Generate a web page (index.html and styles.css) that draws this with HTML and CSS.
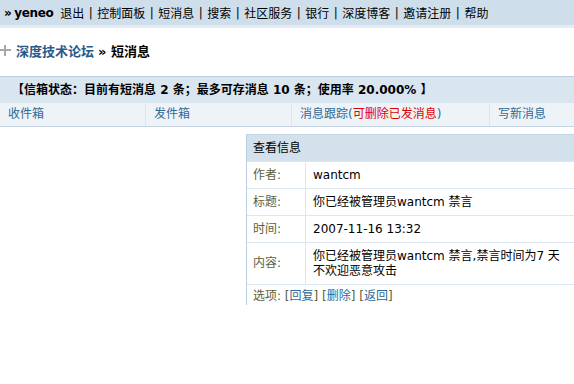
FILE: index.html
```html
<!DOCTYPE html>
<html lang="zh-CN">
<head>
  <meta charset="UTF-8">
  <title>短消息 - 深度技术论坛</title>
  <link rel="stylesheet" href="styles.css">
</head>
<body>

  <div class="topbar">
    <span class="me"><span class="raquo">&raquo;</span>yeneo</span>
    <a href="#">退出</a><span class="sep">|</span>
    <a href="#">控制面板</a><span class="sep">|</span>
    <a href="#">短消息</a><span class="sep">|</span>
    <a href="#">搜索</a><span class="sep">|</span>
    <a href="#">社区服务</a><span class="sep">|</span>
    <a href="#">银行</a><span class="sep">|</span>
    <a href="#">深度博客</a><span class="sep">|</span>
    <a href="#">邀请注册</a><span class="sep">|</span>
    <a href="#">帮助</a>
  </div>

  <div class="nav">
    <svg class="plus" width="11" height="11" viewBox="0 0 11 11">
      <path d="M5 0v11M0 5h11" stroke="#a8a8a8" stroke-width="2"/>
    </svg>
    <a href="#" class="forum">深度技术论坛</a>
    <span class="here">&raquo; 短消息</span>
  </div>

  <div class="pmbox">
    <div class="status">【信箱状态：目前有短消息 <b>2</b> 条；最多可存消息 <b>10</b> 条；使用率 <b>20.000%</b> 】</div>
    <div class="tabs">
      <a href="#" class="tab t1">收件箱</a>
      <a href="#" class="tab t2">发件箱</a>
      <a href="#" class="tab t3">消息跟踪(<span class="red">可删除已发消息</span>)</a>
      <a href="#" class="tab t4">写新消息</a>
    </div>
  </div>

  <div class="msg">
    <div class="msghead">查看信息</div>
    <div class="row"><div class="lbl">作者:</div><div class="val">wantcm</div></div>
    <div class="row"><div class="lbl">标题:</div><div class="val">你已经被管理员wantcm 禁言</div></div>
    <div class="row"><div class="lbl">时间:</div><div class="val">2007-11-16 13:32</div></div>
    <div class="row tall"><div class="lbl">内容:</div><div class="val">你已经被管理员wantcm 禁言,禁言时间为7 天<br>不欢迎恶意攻击</div></div>
    <div class="opts">选项: <a href="#">[<span>回复</span>]</a> <a href="#">[<span>删除</span>]</a> <a href="#">[<span>返回</span>]</a></div>
  </div>

</body>
</html>
```
FILE: styles.css
```css
body {
  margin: 0;
  width: 574px;
  height: 384px;
  overflow: hidden;
  background: #fff;
  font-family: Tahoma, "DejaVu Sans", "Noto Sans CJK SC", sans-serif;
  font-size: 12px;
  color: #000;
}
a {
  text-decoration: none;
}

.topbar {
  display: flex;
  align-items: center;
  height: 25px;
  padding-left: 4px;
  background: #cfdeeb;
  border-bottom: 3px solid #e3ecf4;
  white-space: nowrap;
}
.topbar a {
  color: #000;
}
.topbar .me {
  font-weight: bold;
  font-family: "DejaVu Sans", sans-serif;
  letter-spacing: -0.4px;
  margin-right: 7px;
}
.topbar .raquo {
  margin-right: 3px;
}
.topbar .sep {
  width: 13px;
  text-align: center;
}

.nav {
  display: flex;
  align-items: center;
  height: 20px;
  margin-top: 12px;
  font-weight: bold;
  font-size: 13px;
}
.nav .plus {
  margin-right: 5px;
}
.nav .forum {
  color: #2a5a8a;
  margin-right: 4px;
}

.pmbox {
  margin-top: 16px;
  border-top: 1px solid #bfd0de;
  border-bottom: 1px solid #c2d2df;
}
.status {
  height: 26px;
  line-height: 26px;
  padding-left: 12px;
  background: #d9e5ef;
  font-weight: bold;
  white-space: nowrap;
}
.status b {
  font-family: "DejaVu Sans", sans-serif;
  font-size: 12px;
}
.tabs {
  display: flex;
  height: 23px;
  line-height: 23px;
  background: #eef3f8;
}
.tab {
  box-sizing: border-box;
  color: #2e6a96;
  padding-left: 8px;
  border-left: 1px solid #dbe5ee;
  white-space: nowrap;
}
.tab.t1 { width: 145px; border-left: none; }
.tab.t2 { width: 146px; }
.tab.t3 { width: 198px; }
.tab.t4 { flex: 1; }
.red {
  color: #e00000;
}

.msg {
  margin-top: 7px;
  margin-left: 246px;
  width: 340px;
  border-left: 1px solid #bccfdf;
}
.msghead {
  height: 26px;
  line-height: 26px;
  padding-left: 6px;
  background: #d3e1ed;
  border-top: 1px solid #c4d5e3;
}
.row {
  display: flex;
  min-height: 26px;
  border-top: 1px solid #dbe6ef;
}
.row .lbl {
  width: 52px;
  padding-left: 6px;
  line-height: 26px;
  color: #5e5e3a;
  border-right: 1px solid #dbe6ef;
}
.row .val {
  padding-left: 7px;
  line-height: 26px;
}
.row.tall {
  height: 41px;
  align-items: center;
}
.row.tall .lbl {
  height: 41px;
  line-height: 41px;
}
.row.tall .val {
  line-height: 15px;
}
.opts {
  height: 20px;
  line-height: 22px;
  padding-left: 6px;
  color: #5e5e3a;
  border-top: 1px solid #dbe6ef;
}
.opts a {
  color: #5e5e3a;
}
.opts a span {
  color: #2e6a96;
}
```
